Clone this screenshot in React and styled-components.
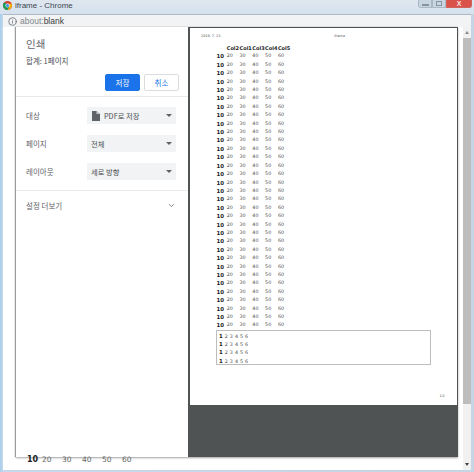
import React from "react";
import styled, { createGlobalStyle } from "styled-components";
import { ChevronDown, Info } from "lucide-react";

const GlobalStyle = createGlobalStyle`
  html, body {
    margin: 0;
    padding: 0;
    overflow: hidden;
    background: #c3d4e6;
  }
  * {
    box-sizing: border-box;
  }
`;

const Frame = styled.div`
  width: 474px;
  height: 472px;
  display: flex;
  flex-direction: column;
  padding: 0 3px 2px 3px;
  background: linear-gradient(to right, #a9cdec 0, #c5d9ec 3px, #c5d5e4 471px);
  font-family: "Noto Sans CJK KR", "Noto Sans", sans-serif;
  overflow: hidden;
`;

const TitleBar = styled.div`
  height: 14px;
  margin: 0 -3px;
  padding-left: 3px;
  display: flex;
  align-items: flex-start;
  gap: 3px;
  background: linear-gradient(to bottom, #dfe6ee, #d5e2ef);
`;

const ChromeLogo = styled.svg`
  width: 9px;
  height: 9px;
  margin-top: 1px;
  flex: none;
`;

const WindowTitle = styled.span`
  font-family: "Liberation Sans", sans-serif;
  font-size: 8px;
  line-height: 11px;
  color: #3c4650;
`;

const WindowControls = styled.div`
  margin-left: auto;
  margin-right: 2px;
  display: flex;
  height: 8px;
`;

const ControlButton = styled.div`
  width: ${(p) => (p.$close ? "26px" : "14px")};
  height: 8px;
  display: flex;
  align-items: center;
  justify-content: center;
  background: ${(p) => (p.$close ? "#d9534a" : "#c8d6e2")};
  border: 1px solid ${(p) => (p.$close ? "#d2635a" : "#a9b8c5")};
  border-top: none;
  border-radius: ${(p) => (p.$first ? "0 0 0 3px" : p.$close ? "0 0 3px 0" : "0")};
  color: #f6e4e2;
  font-family: "Liberation Sans", sans-serif;
  font-size: 7px;
  font-weight: bold;
`;

const ControlGlyph = styled.span`
  display: block;
  width: ${(p) => (p.$max ? "6px" : "7px")};
  height: ${(p) => (p.$max ? "5px" : "2px")};
  margin-top: ${(p) => (p.$max ? "0" : "2px")};
  border: 1px solid #87939f;
  background: ${(p) => (p.$max ? "transparent" : "#eef2f6")};
`;

const AddressBar = styled.div`
  height: 13px;
  flex: none;
  display: flex;
  align-items: center;
  padding-left: 3px;
  gap: 3px;
  background: #f1f3f4;
  border-top: 1px solid #aeb9c4;
  color: #5f6368;
`;

const Address = styled.span`
  font-family: "Liberation Sans", sans-serif;
  font-size: 8.5px;
  color: #80868b;
  b {
    font-weight: normal;
    color: #3c4043;
  }
`;

const Main = styled.div`
  flex: 1;
  min-height: 0;
  display: flex;
  background: #ffffff;
`;

const Viewport = styled.div`
  width: 460px;
  padding-left: 13px;
  display: flex;
  flex-direction: column;
`;

const PrintDialog = styled.div`
  width: 442px;
  height: 430px;
  flex: none;
  display: flex;
  box-shadow: -1px 0 1px #9a9a9a, 0 1px 2px #aaaaaa;
`;

const SidePanel = styled.aside`
  width: 172px;
  flex: none;
  background: #ffffff;
  color: #5f6368;
`;

const PanelHeader = styled.header`
  height: 70px;
  padding: 10px 10px 0;
  border-bottom: 1px solid #e8eaed;
`;

const PanelTitle = styled.h1`
  margin: 0;
  font-size: 10.5px;
  line-height: 14px;
  font-weight: 400;
  color: #5f6368;
`;

const PageCount = styled.p`
  margin: 4px 0 0;
  font-size: 7.5px;
  line-height: 12px;
  color: #4a4e52;
`;

const ButtonRow = styled.div`
  display: flex;
  justify-content: flex-end;
  gap: 4px;
  margin: 7px -1px 0 0;
`;

const ActionButton = styled.button`
  width: 35px;
  height: 17px;
  padding: 0;
  border-radius: 2px;
  border: 1px solid ${(p) => (p.$primary ? "#1a73e8" : "#dadce0")};
  background: ${(p) => (p.$primary ? "#1a73e8" : "#ffffff")};
  color: ${(p) => (p.$primary ? "#ffffff" : "#1a73e8")};
  font-family: inherit;
  font-size: 7.5px;
`;

const SettingRows = styled.div`
  padding: 10px 12px 10px 10px;
  display: grid;
  grid-auto-rows: 17px;
  row-gap: 11px;
  border-bottom: 1px solid #e8eaed;
`;

const SettingRow = styled.div`
  display: grid;
  grid-template-columns: 61px 89px;
  align-items: center;
  font-size: 7.5px;
`;

const FakeSelect = styled.div`
  height: 17px;
  display: flex;
  align-items: center;
  gap: 5px;
  padding: 0 4px 0 4px;
  background: #f1f3f4;
  color: #4a4e52;
  font-size: 7.3px;
`;

const Caret = styled.span`
  margin-left: auto;
  width: 0;
  height: 0;
  border-left: 3px solid transparent;
  border-right: 3px solid transparent;
  border-top: 3px solid #5f6368;
`;

const FileIcon = styled.svg`
  width: 9px;
  height: 10px;
  flex: none;
  margin-right: -1px;
`;

const MoreSettings = styled.div`
  height: 28px;
  padding: 0 12px 0 10px;
  display: flex;
  align-items: center;
  justify-content: space-between;
  font-size: 7.5px;
`;

const Preview = styled.section`
  flex: 1;
  background: #505354;
  padding: 1px 1px 52px 2px;
  display: flex;
`;

const Sheet = styled.div`
  flex: 1;
  background: #ffffff;
  display: flex;
  flex-direction: column;
  padding-top: 4px;
  font-family: "DejaVu Sans", sans-serif;
  color: #4d4d4d;
  font-size: 4.8px;
`;

const SheetHeader = styled.div`
  display: flex;
  height: 8px;
  padding-left: 11px;
  align-items: center;
  font-size: 3.4px;
`;

const SheetDate = styled.span`
  width: 133px;
`;

const DataTable = styled.table`
  margin: 4px 0 0 24px;
  border-collapse: collapse;
  table-layout: fixed;
  width: 75px;

  th, td {
    padding: 0 0 0 1.7px;
    height: 8.4px;
    line-height: 8.4px;
    text-align: left;
    width: 12.7px;
    white-space: nowrap;
  }
  th {
    color: #1c1c1c;
  }
  thead th {
    font-size: 5px;
  }
  tbody th {
    padding: 0 1px 0 0;
    text-align: right;
    font-size: 5.4px;
  }
  th:first-child {
    width: 11px;
  }
`;

const NoteBox = styled.div`
  width: 215px;
  height: 35px;
  margin-left: 26px;
  padding: 1px 2px;
  border: 1px solid #bdbdbd;
  word-spacing: 0.5px;
`;

const NoteLine = styled.div`
  height: 8.3px;
  line-height: 8.3px;
  white-space: nowrap;
  b {
    color: #1c1c1c;
    font-size: 5.4px;
  }
`;

const SheetFooter = styled.div`
  margin-top: auto;
  padding: 0 12px 7px 0;
  text-align: right;
  font-size: 3.4px;
`;

const BehindRow = styled.div`
  display: grid;
  grid-template-columns: 15px repeat(5, 20px);
  padding-left: 11px;
  font-family: "DejaVu Sans", sans-serif;
  font-size: 7.5px;
  line-height: 6px;
  color: #666666;
  b {
    color: #222222;
    font-size: 8px;
  }
`;

const Scrollbar = styled.div`
  width: 8px;
  display: flex;
  flex-direction: column;
  align-items: center;
  background: #f1f1f1;
`;

const ScrollArrow = styled.span`
  height: 11px;
  flex: none;
  display: flex;
  align-items: center;
  &::before {
    content: "";
    border-left: 2.5px solid transparent;
    border-right: 2.5px solid transparent;
    ${(p) => (p.$up ? "border-bottom: 3px solid #8a8a8a;" : "border-top: 3px solid #444444;")}
  }
`;

const ScrollThumb = styled.div`
  width: 8px;
  height: 366px;
  flex: none;
  background: #bdbdbd;
`;

const ScrollTrack = styled.div`
  flex: 1;
`;

const rows = Array.from({ length: 33 }, (_, i) => i);
const notes = [0, 1, 2, 3];

function SelectField({ label, icon, children }) {
  return (
    <SettingRow>
      <span>{label}</span>
      <FakeSelect>
        {icon}
        <span>{children}</span>
        <Caret />
      </FakeSelect>
    </SettingRow>
  );
}

export default function App() {
  return (
    <Frame>
      <GlobalStyle />
      <TitleBar>
        <ChromeLogo viewBox="0 0 24 24">
          <circle cx="12" cy="12" r="12" fill="#db4437" />
          <path d="M12 12 L1.6 18 A12 12 0 0 1 1.6 6 L6 4 Z" fill="#0f9d58" />
          <path d="M12 24 A12 12 0 0 1 1.6 18 L8 10 L17 15 Z" fill="#0f9d58" />
          <path d="M12 7 H22.4 A12 12 0 0 1 12 24 L17 15 Z" fill="#f4b400" />
          <circle cx="12" cy="12" r="5.5" fill="#ffffff" />
          <circle cx="12" cy="12" r="4" fill="#4285f4" />
        </ChromeLogo>
        <WindowTitle>iframe - Chrome</WindowTitle>
        <WindowControls>
          <ControlButton $first>
            <ControlGlyph />
          </ControlButton>
          <ControlButton>
            <ControlGlyph $max />
          </ControlButton>
          <ControlButton $close>X</ControlButton>
        </WindowControls>
      </TitleBar>
      <AddressBar>
        <Info size={9} strokeWidth={2} style={{ marginLeft: 2 }} />
        <Address>
          about:<b>blank</b>
        </Address>
      </AddressBar>
      <Main>
        <Viewport>
          <PrintDialog>
            <SidePanel>
              <PanelHeader>
                <PanelTitle>인쇄</PanelTitle>
                <PageCount>합계: 1페이지</PageCount>
                <ButtonRow>
                  <ActionButton $primary>저장</ActionButton>
                  <ActionButton>취소</ActionButton>
                </ButtonRow>
              </PanelHeader>
              <SettingRows>
                <SelectField
                  label="대상"
                  icon={
                    <FileIcon viewBox="0 0 18 20">
                      <path d="M2 0 H11 L18 6 V20 H2 Z" fill="#5f6368" />
                      <path d="M11 0 V6 H18 Z" fill="#c8cacc" />
                    </FileIcon>
                  }
                >
                  PDF로 저장
                </SelectField>
                <SelectField label="페이지">전체</SelectField>
                <SelectField label="레이아웃">세로 방향</SelectField>
              </SettingRows>
              <MoreSettings>
                <span>설정 더보기</span>
                <ChevronDown size={9} strokeWidth={2} />
              </MoreSettings>
            </SidePanel>
            <Preview>
              <Sheet>
                <SheetHeader>
                  <SheetDate>2019. 7. 23.</SheetDate>
                  <span>iframe</span>
                </SheetHeader>
                <DataTable>
                  <thead>
                    <tr>
                      <th />
                      <th>Col2</th>
                      <th>Col1</th>
                      <th>Col3</th>
                      <th>Col4</th>
                      <th>Col5</th>
                    </tr>
                  </thead>
                  <tbody>
                    {rows.map((row) => (
                      <tr key={row}>
                        <th>10</th>
                        <td>20</td>
                        <td>30</td>
                        <td>40</td>
                        <td>50</td>
                        <td>60</td>
                      </tr>
                    ))}
                  </tbody>
                </DataTable>
                <NoteBox>
                  {notes.map((note) => (
                    <NoteLine key={note}>
                      <b>1</b> 2 3 4 5 6
                    </NoteLine>
                  ))}
                </NoteBox>
                <SheetFooter>1/1</SheetFooter>
              </Sheet>
            </Preview>
          </PrintDialog>
          <BehindRow>
            <b>10</b>
            <span>20</span>
            <span>30</span>
            <span>40</span>
            <span>50</span>
            <span>60</span>
          </BehindRow>
        </Viewport>
        <Scrollbar>
          <ScrollArrow $up />
          <ScrollThumb />
          <ScrollTrack />
          <ScrollArrow />
        </Scrollbar>
      </Main>
    </Frame>
  );
}
